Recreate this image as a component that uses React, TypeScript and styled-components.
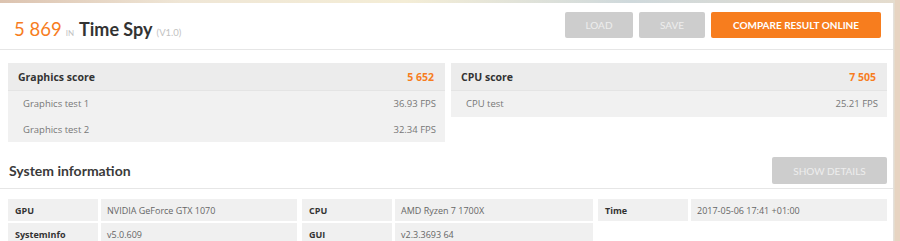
import React from "react";
import styled, { createGlobalStyle } from "styled-components";

const ORANGE = "#f77d1e";

const GlobalStyle = createGlobalStyle`
  html, body {
    margin: 0;
    padding: 0;
  }
  body {
    background: linear-gradient(90deg, #dcc3b0 0%, #efe6d6 20%, #f4edd6 45%, #cfd9dc 70%, #e5dccd 100%);
    font-family: "Open Sans", "Liberation Sans", sans-serif;
    overflow: hidden;
  }
`;

const Page = styled.div`
  height: 241px;
  padding-top: 3px;
  box-sizing: border-box;
  background: linear-gradient(90deg, transparent 895px, #e7d4c2 895px);
`;

const Card = styled.div`
  width: 893px;
  height: 238px;
  background: #fff;
  border-right: 1px solid #e4e0dc;
  overflow: hidden;
`;

const Header = styled.header`
  display: flex;
  align-items: center;
  justify-content: space-between;
  height: 47px;
  padding: 0 12px 0 14px;
  border-bottom: 1px solid #e6e6e6;
  box-sizing: border-box;
  margin-bottom: 13px;
`;

const Title = styled.div`
  display: flex;
  align-items: baseline;
  font-family: Lato, "Liberation Sans", sans-serif;
  padding-top: 6px;
`;

const Score = styled.span`
  color: ${ORANGE};
  font-size: 18.5px;
  margin-right: 4px;
`;

const Faint = styled.span<{ $size: number }>`
  color: #c2c2c2;
  font-size: ${(p) => p.$size}px;
  margin-right: 5px;
`;

const TestName = styled.span`
  color: #333;
  font-size: 18px;
  font-weight: 700;
  margin-right: 4px;
`;

const Buttons = styled.div`
  display: flex;
  gap: 6px;
  margin-top: -2px;
`;

const Button = styled.button<{ $primary?: boolean; $w: number; $h?: number }>`
  width: ${(p) => p.$w}px;
  height: ${(p) => p.$h ?? 26}px;
  border: none;
  border-radius: 2px;
  font-family: Lato, "Liberation Sans", sans-serif;
  font-size: 10px;
  font-weight: ${(p) => (p.$primary ? 700 : 400)};
  color: ${(p) => (p.$primary ? "#fff" : "#eeeeee")};
  background: ${(p) => (p.$primary ? ORANGE : "#cdcdcd")};
  text-transform: uppercase;
  padding: 0;
`;

const Panels = styled.div`
  display: grid;
  grid-template-columns: 437px 436px;
  gap: 6px;
  padding: 0 7px 0 8px;
  align-items: start;
`;

const Panel = styled.div`
  background: #f1f1f1;
`;

const PanelHead = styled.div`
  display: flex;
  justify-content: space-between;
  align-items: center;
  height: 27px;
  padding: 0 11px 0 10px;
  background: #ececec;
  border-bottom: 1px solid #e4e4e4;
  font-size: 10.5px;
  font-weight: 700;
  color: #333;
`;

const PanelScore = styled.span`
  color: ${ORANGE};
`;

const PanelRow = styled.div`
  display: flex;
  justify-content: space-between;
  align-items: center;
  height: 25.5px;
  padding: 0 9px 0 15px;
  font-size: 9.5px;
  color: #777;
`;

const SectionHead = styled.div`
  display: flex;
  justify-content: space-between;
  align-items: center;
  margin-top: 15px;
  padding: 0 6px 4px 9px;
  border-bottom: 1px solid #e6e6e6;
`;

const SectionTitle = styled.h2`
  margin: 0;
  font-family: Lato, "Liberation Sans", sans-serif;
  font-size: 14px;
  font-weight: 700;
  color: #3a3a3a;
`;

const InfoGrid = styled.div`
  display: grid;
  grid-template-columns: 289px 291px 289px;
  gap: 5px;
  padding: 10px 7px 0 8px;
  align-items: start;
`;

const InfoGroup = styled.div`
  display: grid;
  grid-template-columns: 90px 1fr;
  gap: 2px 3px;
`;

const Cell = styled.div<{ $label?: boolean }>`
  height: 22px;
  display: flex;
  align-items: center;
  background: #f0f0f0;
  padding-left: ${(p) => (p.$label ? 7 : 6)}px;
  font-size: 9px;
  font-weight: ${(p) => (p.$label ? 700 : 400)};
  color: ${(p) => (p.$label ? "#333" : "#666")};
`;

const groups: [string, string][][] = [
  [
    ["GPU", "NVIDIA GeForce GTX 1070"],
    ["SystemInfo", "v5.0.609"],
  ],
  [
    ["CPU", "AMD Ryzen 7 1700X"],
    ["GUI", "v2.3.3693 64"],
  ],
  [["Time", "2017-05-06 17:41 +01:00"]],
];

export default function App() {
  return (
    <>
      <GlobalStyle />
      <Page>
        <Card>
          <Header>
            <Title>
              <Score>5 869</Score>
              <Faint $size={8}>IN</Faint>
              <TestName>Time Spy</TestName>
              <Faint $size={9.5}>(V1.0)</Faint>
            </Title>
            <Buttons>
              <Button $w={68}>Load</Button>
              <Button $w={66}>Save</Button>
              <Button $w={170} $primary>
                Compare result online
              </Button>
            </Buttons>
          </Header>

          <Panels>
            <Panel>
              <PanelHead>
                <span>Graphics score</span>
                <PanelScore>5 652</PanelScore>
              </PanelHead>
              <PanelRow>
                <span>Graphics test 1</span>
                <span>36.93 FPS</span>
              </PanelRow>
              <PanelRow>
                <span>Graphics test 2</span>
                <span>32.34 FPS</span>
              </PanelRow>
            </Panel>
            <Panel>
              <PanelHead>
                <span>CPU score</span>
                <PanelScore>7 505</PanelScore>
              </PanelHead>
              <PanelRow>
                <span>CPU test</span>
                <span>25.21 FPS</span>
              </PanelRow>
            </Panel>
          </Panels>

          <SectionHead>
            <SectionTitle>System information</SectionTitle>
            <Button $w={115} $h={27}>
              Show details
            </Button>
          </SectionHead>

          <InfoGrid>
            {groups.map((g, i) => (
              <InfoGroup key={i}>
                {g.map(([k, v]) => (
                  <React.Fragment key={k}>
                    <Cell $label>{k}</Cell>
                    <Cell>{v}</Cell>
                  </React.Fragment>
                ))}
              </InfoGroup>
            ))}
          </InfoGrid>
        </Card>
      </Page>
    </>
  );
}
